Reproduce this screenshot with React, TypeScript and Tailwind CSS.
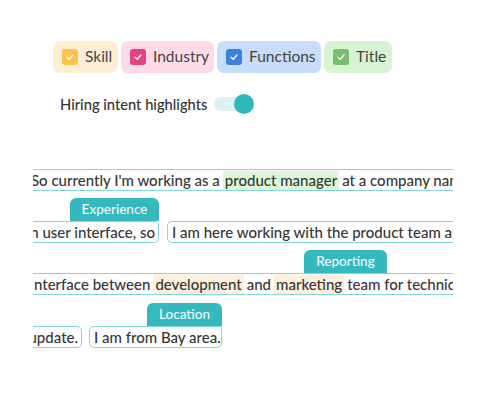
const chips = [
  { label: "Skill", w: "w-[65px]", bg: "bg-[#fdefd6]", box: "bg-[#fcc34c]" },
  { label: "Industry", w: "w-[93px]", bg: "bg-[#fddbe7]", box: "bg-[#e4437f]" },
  { label: "Functions", w: "w-[104px]", bg: "bg-[#c8dcfb]", box: "bg-[#3b80e2]" },
  { label: "Title", w: "w-[68px]", bg: "bg-[#d7f5d3]", box: "bg-[#78bd70]" },
]

function Check() {
  return (
    <svg width="10" height="10" viewBox="0 0 10 10" fill="none">
      <path d="M2 5.2 L4.2 7.2 L8 3" stroke="white" strokeWidth="1.3" strokeLinecap="round" strokeLinejoin="round" />
    </svg>
  )
}

function Tag({ label, className }: { label: string; className: string }) {
  return (
    <div
      className={`h-[23px] rounded-t-[6px] bg-[#35b9be] text-[13.5px] text-[#eefafa] flex items-center justify-center ${className}`}
    >
      {label}
    </div>
  )
}

export default function App() {
  return (
    <div className="w-[487px] h-[400px] bg-white font-['Lato',sans-serif] text-[#3b3b3b]">
      {/* category chips */}
      <div className="pt-[41px] pl-[53px] flex gap-[3px]">
        {chips.map((c) => (
          <div key={c.label} className={`${c.w} ${c.bg} h-[32px] rounded-[7px] flex items-center pl-[9px] gap-[7px]`}>
            <div className={`${c.box} w-[16px] h-[16px] rounded-[3px] flex items-center justify-center`}>
              <Check />
            </div>
            <span className="text-[15.5px] text-[#444]">{c.label}</span>
          </div>
        ))}
      </div>

      {/* toggle */}
      <div className="mt-[21px] ml-[60px] flex items-center gap-[7px] h-[20px]">
        <span className="text-[14.7px] font-medium text-[#333]">Hiring intent highlights</span>
        <div className="relative w-[40px] h-[20px]">
          <div className="absolute left-0 right-[3px] top-[3px] h-[14px] rounded-full bg-[#dcf3f4]" />
          <div className="absolute right-0 top-0 w-[20px] h-[20px] rounded-full bg-[#30b7bc]" />
        </div>
      </div>

      {/* transcript */}
      <div className="mt-[55px] ml-[33px] w-[420px] overflow-hidden text-[15px] font-medium leading-none text-[#363636]">
        <div className="h-[22px] border-y-[1.5px] border-[#86d6d9] flex items-center whitespace-nowrap -ml-[2px]">
          So currently I'm working as a
          <span className="bg-[#dcf6d8] px-[2px] mx-[3px] py-[2px]">product manager</span>at a company named
        </div>

        <div className="mt-[7px]">
          <Tag label="Experience" className="ml-[37px] w-[89px]" />
          <div className="flex gap-[8px] h-[22px] whitespace-nowrap">
            <div className="w-[126px] shrink-0 border-y-[1.5px] border-r-[1.5px] border-[#86d6d9] rounded-r-[5px] flex items-center justify-end pr-[3px] overflow-hidden">
              n user interface, so
            </div>
            <div className="shrink-0 border-y-[1.5px] border-l-[1.5px] border-[#86d6d9] rounded-l-[5px] flex items-center pl-[4px]">
              I am here working with the product team and
            </div>
          </div>
        </div>

        <div className="mt-[7px]">
          <Tag label="Reporting" className="ml-[271px] w-[83px]" />
          <div className="h-[22px] border-y-[1.5px] border-[#86d6d9] flex items-center whitespace-nowrap pl-[1px]">
            nterface between
            <span className="bg-[#fdf0dc] px-[2px] mx-[3px] py-[2px]">development</span>and
            <span className="bg-[#fdf0dc] px-[2px] mx-[3px] py-[2px]">marketing</span>team for technical
          </div>
        </div>

        <div className="mt-[8px]">
          <Tag label="Location" className="ml-[114px] w-[75px]" />
          <div className="flex gap-[7px] h-[22px] whitespace-nowrap">
            <div className="w-[49px] shrink-0 border-y-[1.5px] border-r-[1.5px] border-[#86d6d9] rounded-r-[5px] flex items-center justify-end pr-[3px] overflow-hidden">
              update.
            </div>
            <div className="w-[133px] shrink-0 border-[1.5px] border-[#86d6d9] rounded-[5px] rounded-tr-none flex items-center pl-[4px]">
              I am from Bay area.
            </div>
          </div>
        </div>
      </div>
    </div>
  )
}
